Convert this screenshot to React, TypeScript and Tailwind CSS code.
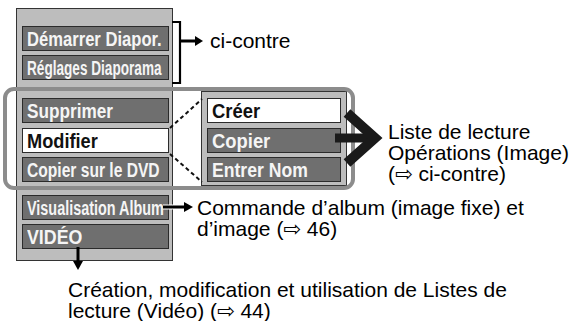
import React from "react";

type BtnProps = { label: string; white?: boolean; cls: string; sx: string };

function Btn({ label, white, cls, sx }: BtnProps) {
  return (
    <div
      className={
        "h-[25px] border border-[#2b2b2b] flex items-center pl-[4px] overflow-hidden whitespace-nowrap font-bold text-[20px] leading-none " +
        (white ? "bg-white text-[#111111] " : "bg-[#6f6f6f] text-[#f5f5f5] ") +
        cls
      }
    >
      <span className={"inline-block origin-left " + sx}>{label}</span>
    </div>
  );
}

export default function App() {
  return (
    <div
      className="relative w-[573px] h-[321px] bg-white overflow-hidden text-black"
      style={{ fontFamily: '"Liberation Sans", "DejaVu Sans", Arial, sans-serif' }}
    >
      {/* left menu panel */}
      <div className="absolute left-[16px] top-[8px] w-[157px] h-[253px] bg-[#bdbdbd] border border-[#333333] flex flex-col pt-[17px] pl-[5px] pr-[3px]">
        <Btn label="Démarrer Diapor." cls="" sx="scale-x-[0.83]" />
        <Btn label="Réglages Diaporama" cls="mt-[4px]" sx="scale-x-[0.68]" />
        <Btn label="Supprimer" cls="mt-[18px]" sx="scale-x-[0.86]" />
        <Btn label="Modifier" white cls="mt-[5px]" sx="scale-x-[0.91]" />
        <Btn label="Copier sur le DVD" cls="mt-[4px]" sx="scale-x-[0.78]" />
        <Btn label="Visualisation Album" cls="mt-[13px]" sx="scale-x-[0.72]" />
        <Btn label="VIDÉO" cls="mt-[4px]" sx="scale-x-[0.89]" />
      </div>

      {/* right sub panel */}
      <div className="absolute left-[201px] top-[91px] w-[146px] h-[95px] bg-[#bdbdbd] border border-[#333333] flex flex-col pt-[6px] pl-[5px] pr-[5px]">
        <Btn label="Créer" white cls="" sx="scale-x-[0.92]" />
        <Btn label="Copier" cls="mt-[5px]" sx="scale-x-[0.92]" />
        <Btn label="Entrer Nom" cls="mt-[4px]" sx="scale-x-[0.88]" />
      </div>

      {/* rounded grouping box */}
      <div className="absolute left-[3px] top-[87px] w-[352px] h-[103px] border-[4px] border-[#8c8c8c] rounded-[11px]" />

      {/* drawings: bracket, arrows, dashed lines */}
      <svg className="absolute left-0 top-0 pointer-events-none" width="573" height="321" viewBox="0 0 573 321">
        {/* bracket */}
        <path d="M172 22 H180 V83 H172" fill="none" stroke="#000" strokeWidth="2.2" />
        <line x1="181" y1="41" x2="197" y2="41" stroke="#000" strokeWidth="3" />
        <path d="M195 36 L203 41 L195 46 Z" fill="#000" />
        {/* dashed lines */}
        <line x1="170" y1="128" x2="202" y2="99" stroke="#111" strokeWidth="2" strokeDasharray="4 3" />
        <line x1="170" y1="154" x2="202" y2="182" stroke="#111" strokeWidth="2" strokeDasharray="4 3" />
        {/* big arrow */}
        <line x1="335" y1="138" x2="374" y2="138" stroke="#1a1a1a" strokeWidth="9" />
        <polyline points="347,113 375,138 347,163" fill="none" stroke="#1a1a1a" strokeWidth="10" strokeLinejoin="miter" />
        {/* album arrow */}
        <line x1="163" y1="207" x2="186" y2="207" stroke="#fff" strokeWidth="5" />
        <line x1="163" y1="207" x2="186" y2="207" stroke="#000" strokeWidth="3" />
        <path d="M184 202 L193 207 L184 212 Z" fill="#000" />
        {/* video arrow */}
        <line x1="78" y1="247" x2="78" y2="263" stroke="#000" strokeWidth="3" />
        <path d="M73 261 L78 270 L83 261 Z" fill="#000" />
      </svg>

      {/* annotations */}
      <div className="absolute left-[210px] top-[30px] text-[21px] leading-[21px] whitespace-nowrap">ci-contre</div>
      <div className="absolute left-[388px] top-[121px] text-[21px] leading-[21px] whitespace-nowrap">
        <div>Liste de lecture</div>
        <div>Opérations (Image)</div>
        <div>(⇨ ci-contre)</div>
      </div>
      <div className="absolute left-[197px] top-[197px] text-[21px] leading-[21px] whitespace-nowrap">
        <div>Commande d’album (image fixe) et</div>
        <div>d’image (⇨ 46)</div>
      </div>
      <div className="absolute left-[68px] top-[279px] text-[21px] leading-[21px] whitespace-nowrap">
        <div>Création, modification et utilisation de Listes de</div>
        <div>lecture (Vidéo) (⇨ 44)</div>
      </div>
    </div>
  );
}
